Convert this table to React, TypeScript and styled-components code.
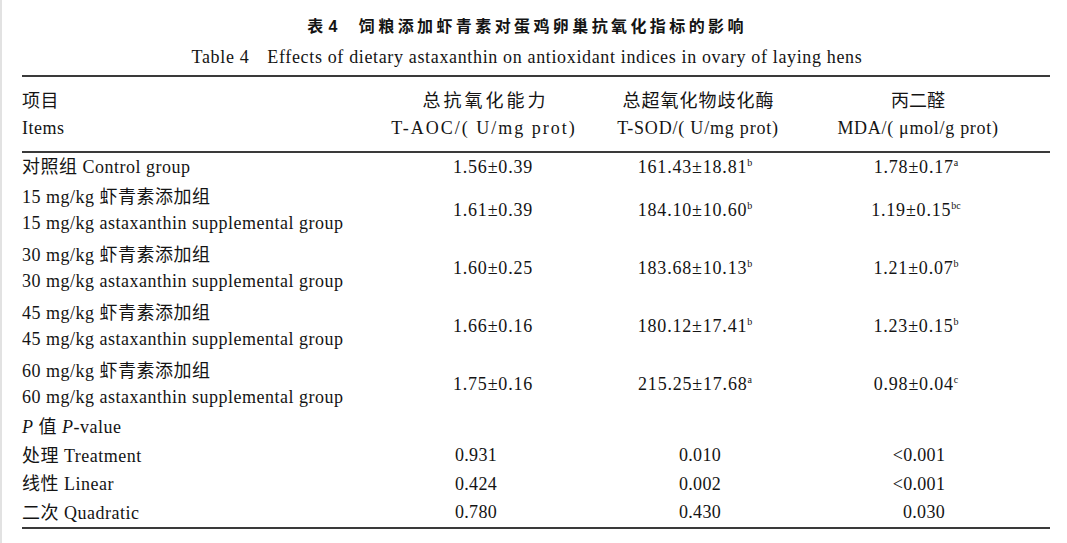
import React from 'react';
import styled, { createGlobalStyle } from 'styled-components';

const Global = createGlobalStyle`
  html, body { margin: 0; padding: 0; background: #fff; }
  body {
    font-family: "Liberation Serif", "Noto Sans CJK SC", serif;
    color: #141414;
  }
`;

const Page = styled.div`
  width: 1067px;
  height: 543px;
  box-sizing: border-box;
  border-left: 2px solid #e2e2e2;
  padding: 0 17px 0 20px;
  display: flex;
  flex-direction: column;
  overflow: hidden;
`;

const Caption = styled.div`
  display: flex;
  flex-direction: column;
  align-items: center;
  padding: 13px 18px 6px 0;
`;

const Title = styled.div`
  font-family: "Noto Sans CJK SC", "Liberation Sans", sans-serif;
  font-weight: 700;
  font-size: 16px;
  line-height: 24px;
  letter-spacing: 3.4px;
  white-space: nowrap;
`;

const TitleNum = styled.span`
  font-family: "Liberation Sans", sans-serif;
  font-weight: 700;
  margin-left: 2px;
  margin-right: 18px;
`;

const Subtitle = styled.div`
  margin-top: 6px;
  font-size: 18px;
  line-height: 24px;
  letter-spacing: 0.65px;
  white-space: nowrap;
`;

const SubLabel = styled.span`
  margin-right: 18px;
`;

const Table = styled.div`
  width: 1028px;
  border-top: 2px solid #3a3a3a;
  border-bottom: 2px solid #3a3a3a;
  display: flex;
  flex-direction: column;
`;

const Row = styled.div<{ $h: number; $rule?: boolean }>`
  display: grid;
  grid-template-columns: 357px 210px 218px 222px;
  align-items: center;
  height: ${p => p.$h}px;
  box-sizing: border-box;
  border-bottom: ${p => (p.$rule ? '2px solid #3a3a3a' : 'none')};
`;

const Label = styled.div`
  display: flex;
  flex-direction: column;
  font-size: 18px;
  line-height: 26px;
  letter-spacing: 0.5px;
  white-space: nowrap;
`;

const HeadLabel = styled(Label)`
  line-height: 27px;
  padding-top: 2px;
`;

const Head = styled.div<{ $ls: number }>`
  display: flex;
  flex-direction: column;
  align-items: center;
  font-size: 18px;
  line-height: 27px;
  padding-top: 2px;
  white-space: nowrap;
  & > span:first-child {
    letter-spacing: ${p => p.$ls}px;
    margin-right: -${p => p.$ls}px;
  }
`;

const Unit = styled.span<{ $ls: number }>`
  letter-spacing: ${p => p.$ls}px;
`;

const Value = styled.div<{ $shift?: number; $ls?: number }>`
  text-align: center;
  font-size: 18px;
  letter-spacing: ${p => p.$ls ?? 0.8}px;
  white-space: nowrap;
  padding-left: ${p => ((p.$shift ?? 0) > 0 ? (p.$shift as number) * 2 : 0)}px;
  padding-right: ${p => ((p.$shift ?? 0) < 0 ? -(p.$shift as number) * 2 : 0)}px;
`;

const Sup = styled.sup`
  font-size: 10px;
  line-height: 0;
  vertical-align: 7px;
  margin-left: 0;
  letter-spacing: 0;
`;

const It = styled.i`
  font-style: italic;
`;

type Group = { dose: string; v: [string, string, string]; s: [string, string, string] };

const groups: Group[] = [
  { dose: '15', v: ['1.61±0.39', '184.10±10.60', '1.19±0.15'], s: ['', 'b', 'bc'] },
  { dose: '30', v: ['1.60±0.25', '183.68±10.13', '1.21±0.07'], s: ['', 'b', 'b'] },
  { dose: '45', v: ['1.66±0.16', '180.12±17.41', '1.23±0.15'], s: ['', 'b', 'b'] },
  { dose: '60', v: ['1.75±0.16', '215.25±17.68', '0.98±0.04'], s: ['', 'a', 'c'] },
];

const pRows: { label: string; en: string; v: [string, string, string]; h: number }[] = [
  { label: '处理', en: 'Treatment', v: ['0.931', '0.010', '<0.001'], h: 29 },
  { label: '线性', en: 'Linear', v: ['0.424', '0.002', '<0.001'], h: 28 },
  { label: '二次', en: 'Quadratic', v: ['0.780', '0.430', '0.030'], h: 29 },
];

const meanShift: [number, number, number] = [9, -3, -2];

function Means({ v, s }: { v: [string, string, string]; s: [string, string, string] }) {
  return (
    <>
      {v.map((x, i) => (
        <Value key={i} $shift={meanShift[i]}>
          {x}
          {s[i] ? <Sup>{s[i]}</Sup> : null}
        </Value>
      ))}
    </>
  );
}

export default function App() {
  return (
    <>
      <Global />
      <Page>
        <Caption>
          <Title>
            表<TitleNum>4</TitleNum>饲粮添加虾青素对蛋鸡卵巢抗氧化指标的影响
          </Title>
          <Subtitle>
            <SubLabel>Table 4</SubLabel>Effects of dietary astaxanthin on antioxidant indices in ovary of laying hens
          </Subtitle>
        </Caption>
        <Table>
          <Row $h={76} $rule>
            <HeadLabel>
              <span>项目</span>
              <span>Items</span>
            </HeadLabel>
            <Head $ls={3}>
              <span>总抗氧化能力</span>
              <Unit $ls={2}>T-AOC/( U/mg prot)</Unit>
            </Head>
            <Head $ls={1}>
              <span>总超氧化物歧化酶</span>
              <Unit $ls={0.8}>T-SOD/( U/mg prot)</Unit>
            </Head>
            <Head $ls={0}>
              <span>丙二醛</span>
              <Unit $ls={0.7}>MDA/( μmol/g prot)</Unit>
            </Head>
          </Row>
          <Row $h={28}>
            <Label>
              <span>对照组 Control group</span>
            </Label>
            <Means v={['1.56±0.39', '161.43±18.81', '1.78±0.17']} s={['', 'b', 'a']} />
          </Row>
          {groups.map(g => (
            <Row key={g.dose} $h={58}>
              <Label>
                <span>{g.dose} mg/kg 虾青素添加组</span>
                <span>{g.dose} mg/kg astaxanthin supplemental group</span>
              </Label>
              <Means v={g.v} s={g.s} />
            </Row>
          ))}
          <Row $h={28}>
            <Label>
              <span>
                <It>P</It> 值 <It>P</It>-value
              </span>
            </Label>
          </Row>
          {pRows.map(r => (
            <Row key={r.en} $h={r.h}>
              <Label>
                <span>
                  {r.label} {r.en}
                </span>
              </Label>
              <Value $shift={-8} $ls={0.3}>{r.v[0]}</Value>
              <Value $shift={2} $ls={0.3}>{r.v[1]}</Value>
              <Value $shift={r.v[2].startsWith('<') ? 1 : 6} $ls={0.3}>{r.v[2]}</Value>
            </Row>
          ))}
        </Table>
      </Page>
    </>
  );
}
